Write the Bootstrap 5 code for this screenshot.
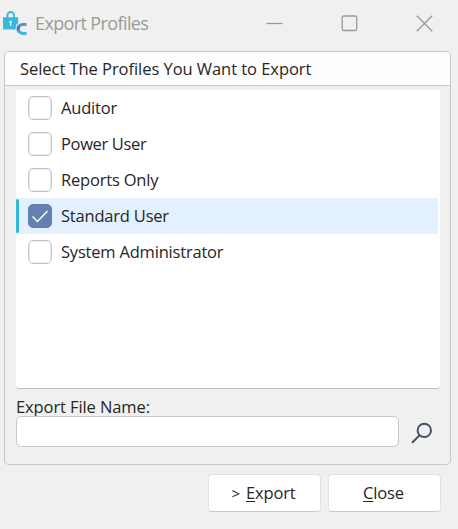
<!DOCTYPE html>
<html lang="en">
<head>
<meta charset="utf-8">
<meta name="viewport" content="width=device-width, initial-scale=1">
<title>Export Profiles</title>
<link href="https://cdn.jsdelivr.net/npm/bootstrap@5.3.0/dist/css/bootstrap.min.css" rel="stylesheet">
<style>
body{background:#f0f0ee;color:#262626;font-family:"Open Sans","Noto Sans",sans-serif;font-size:16.5px;line-height:24px;letter-spacing:-.2px;white-space:nowrap;height:529px;overflow:hidden}
.titlebar{height:51px;padding:0 25px 5px 3px;color:#9b9b9b}
.title-text{font-size:18px;letter-spacing:-.62px;margin-left:8px}
.win-controls{gap:58px}
.win-controls svg,.titlebar svg,.search-btn svg{display:block}
.panel{margin:0 7px 0 4px;height:414px;border:1px solid #c6c6c6;border-radius:5px;overflow:hidden}
.panel-title{height:34px;background:#fdfdfd;border-bottom:1px solid #c6c6c6;padding:0 15px;line-height:34px;letter-spacing:-.05px}
.profiles{margin:4px 10px 0 11px;height:299px;background:#fff;border-bottom:1px solid #bdbdbd;border-radius:3px}
.profile{height:36px;padding-left:12px;margin-right:2px;border-radius:2px}
.profile .form-check-input{width:24px;height:24px;margin:0 9px 0 0;border:1px solid #c8c8c8;border-radius:5px;box-shadow:inset 0 0 0 .5px #d6d6d6}
.profile.chosen{background:#e3f1fe;padding-left:0}
.profile.chosen::before{content:"";width:3px;height:34px;margin-right:9px;border-radius:2px;background:#31b8de}
.profile .form-check-input:checked{background-color:#657fae;border-color:#657fae;box-shadow:none;background-size:24px 24px;background-image:url("data:image/svg+xml,%3Csvg xmlns='http://www.w3.org/2000/svg' viewBox='0 0 24 24'%3E%3Cpath d='M4.5 12.5l5 5L19.5 7' fill='none' stroke='white' stroke-width='1.4'/%3E%3C/svg%3E")}
.tight{letter-spacing:-.35px}
.file-label{margin:8px 0 0 11px;height:19px;line-height:20px;letter-spacing:-.1px}
.file-row{padding-left:11px}
.file-row .form-control{width:383px;height:31px;border:1px solid #c8c8c8;border-radius:5px;padding:0 8px}
.search-btn{margin:2px 0 0 12px}
.actions{margin:9px 17px 0 0;gap:7px}
.actions .btn{width:113px;height:38px;background:#fff;border:1px solid #e2e2e2;border-bottom-color:#cbcbcb;border-radius:4px;color:#262626;font-size:16.5px;line-height:34px;letter-spacing:-.15px;padding:0 2px 0 0}
.actions .arrow{font-size:15px;margin-right:2px}
.actions u{text-decoration-thickness:1px;text-underline-offset:2px}
</style>
</head>
<body>
<header class="titlebar d-flex align-items-center">
  <svg width="24" height="26" viewBox="0 0 24 26">
    <path d="M4.4 8V5.300a3.300 3.300 0 0 1 6.600 0v2.700" fill="none" stroke="#36b9df" stroke-width="1.900"/>
    <path d="M0 7.200h15.200v5.800c-2 1.200-2.800 3.600-2.400 6.400H0z" fill="#36b9df"/>
    <circle cx="7.600" cy="12" r="1.200" fill="#e9f7fb"/><path d="M7 12h1.200v4H7z" fill="#e9f7fb"/>
    <path d="M23.500 14.500h-4c-1.800.2-3.300 1-4 2.600" fill="none" stroke="#5c8fe0" stroke-width="3"/>
    <path d="M15.800 16.200c-1 1.700-.9 3.800.2 5.300" fill="none" stroke="#4c72b2" stroke-width="3"/>
    <path d="M15.400 20.600c1 1.800 2.500 2.700 4.600 2.900h3.500" fill="none" stroke="#36b9df" stroke-width="3"/>
  </svg>
  <span class="title-text">Export Profiles</span>
  <div class="win-controls d-flex ms-auto align-items-center">
    <svg width="17" height="17" viewBox="0 0 17 17"><path d="M.5 8.500h16" stroke="#999" stroke-width="1.300"/></svg>
    <svg width="17" height="17" viewBox="0 0 17 17"><rect x="1.200" y="1" width="14.500" height="14.500" rx="1.500" fill="none" stroke="#999" stroke-width="1.300"/></svg>
    <svg width="17" height="17" viewBox="0 0 17 17"><path d="M.8.8l15.400 15.400M16.200.8L.8 16.200" stroke="#999" stroke-width="1.300"/></svg>
  </div>
</header>
<main class="panel">
  <div class="panel-title"><span>Select The Profiles You Want to Export</span></div>
  <div class="profiles">
    <label class="profile d-flex align-items-center"><input class="form-check-input" type="checkbox"><span>Auditor</span></label>
    <label class="profile d-flex align-items-center"><input class="form-check-input" type="checkbox"><span class="tight">Power User</span></label>
    <label class="profile d-flex align-items-center"><input class="form-check-input" type="checkbox"><span>Reports Only</span></label>
    <label class="profile chosen d-flex align-items-center"><input class="form-check-input" type="checkbox" checked><span>Standard User</span></label>
    <label class="profile d-flex align-items-center"><input class="form-check-input" type="checkbox"><span>System Administrator</span></label>
  </div>
  <label class="file-label d-block" for="file-name">Export File Name:</label>
  <div class="file-row d-flex align-items-center">
    <input id="file-name" class="form-control" type="text">
    <button class="search-btn btn p-0 border-0" type="button" aria-label="Browse">
      <svg width="22" height="22" viewBox="0 0 22 22" fill="none" stroke="#465066" stroke-width="2" stroke-linecap="round"><circle cx="13.300" cy="8.400" r="6.700"/><path d="M8.400 13.400L1.600 20.200"/></svg>
    </button>
  </div>
</main>
<div class="actions d-flex justify-content-end">
  <button class="btn" type="button"><span class="arrow">&gt;</span> <u>E</u>xport</button>
  <button class="btn" type="button"><u>C</u>lose</button>
</div>
<script src="https://cdn.jsdelivr.net/npm/bootstrap@5.3.0/dist/js/bootstrap.bundle.min.js"></script>
</body>
</html>
